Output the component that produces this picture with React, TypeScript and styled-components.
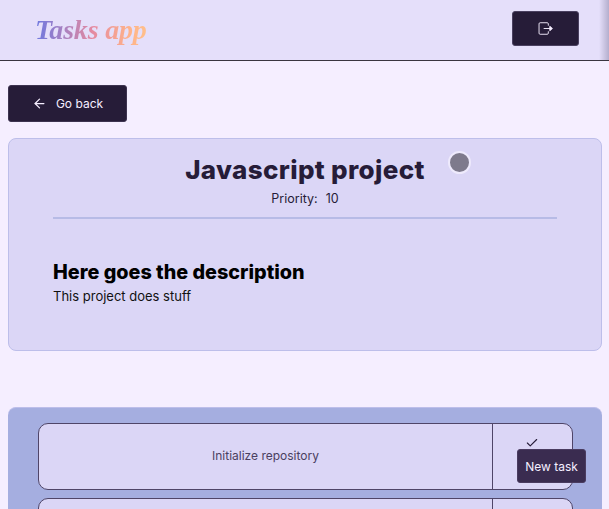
import { ArrowLeft, Check } from 'lucide-react'
import styled, { createGlobalStyle } from 'styled-components'

const GlobalStyle = createGlobalStyle`
  html, body {
    margin: 0;
    height: 100%;
    overflow: hidden;
    background: #f5eeff;
  }
  body {
    font-family: Inter, "Liberation Sans", sans-serif;
  }
  * {
    box-sizing: border-box;
  }
`

function ExitIcon() {
  return (
    <svg width="16" height="13" viewBox="0 0 17 14" fill="none" stroke="currentColor" strokeWidth="1">
      <path d="M11 4V2a1.2 1.2 0 0 0-1.2-1.2H2.2A1.2 1.2 0 0 0 1 2v10a1.2 1.2 0 0 0 1.2 1.2h7.6A1.2 1.2 0 0 0 11 12v-2" />
      <path d="M6 7h8" />
      <path d="M12.6 4.6 15.4 7l-2.8 2.4z" fill="currentColor" />
    </svg>
  )
}

export default function App() {
  return (
    <Page>
      <GlobalStyle />
      <Header>
        <Logo>Tasks app</Logo>
        <LogoutButton title="Log out">
          <ExitIcon />
        </LogoutButton>
      </Header>
      <Main>
        <BackButton>
          <ArrowLeft size={15} strokeWidth={2} />
          Go back
        </BackButton>
        <ProjectCard>
          <TitleRow>
            <Title>Javascript project</Title>
            <StatusDot />
          </TitleRow>
          <Priority>
            <span>Priority:</span>
            <span>10</span>
          </Priority>
          <Divider />
          <DescriptionTitle>Here goes the description</DescriptionTitle>
          <Description>This project does stuff</Description>
        </ProjectCard>
        <TaskPanel>
          <TaskRow>
            <TaskName>Initialize repository</TaskName>
            <TaskAction>
              <Check size={14} strokeWidth={1.9} />
            </TaskAction>
          </TaskRow>
          <TaskRow>
            <TaskName />
            <TaskAction />
          </TaskRow>
        </TaskPanel>
      </Main>
      <NewTaskButton>New task</NewTaskButton>
    </Page>
  )
}

const Page = styled.div`
  height: 509px;
  overflow: hidden;
`

const Header = styled.header`
  position: relative;
  display: flex;
  align-items: center;
  justify-content: space-between;
  height: 61px;
  padding: 0 30px 0 35px;
  background: #e5dffa;
  border-bottom: 1px solid #3a3540;

  &::after {
    content: '';
    position: absolute;
    top: 0;
    right: 0;
    bottom: 0;
    width: 10px;
    background: linear-gradient(90deg, rgba(120, 115, 150, 0), rgba(120, 115, 150, 0.45));
  }
`

const Logo = styled.div`
  font-family: "Liberation Serif", serif;
  font-size: 28px;
  font-style: italic;
  font-weight: 700;
  letter-spacing: -0.2px;
  background: linear-gradient(90deg, #6d78e0 0%, #e58aa0 52%, #ffb38a 85%, #ffc08a 100%);
  background-clip: text;
  -webkit-background-clip: text;
  color: transparent;
`

const LogoutButton = styled.button`
  display: flex;
  align-items: center;
  justify-content: center;
  width: 67px;
  height: 35px;
  padding: 0;
  margin-bottom: 3px;
  color: #f5eeff;
  background: #261c38;
  border: 1px solid #4a4060;
  border-radius: 3px;
`

const Main = styled.main`
  display: flex;
  flex-direction: column;
  align-items: stretch;
  padding: 24px 7px 0 8px;
`

const BackButton = styled.button`
  display: flex;
  align-items: center;
  justify-content: center;
  gap: 9px;
  width: 119px;
  height: 37px;
  padding: 0;
  font-family: inherit;
  font-size: 12px;
  color: #f5eeff;
  background: #261c38;
  border: 1px solid #3d3350;
  border-radius: 3px;
`

const ProjectCard = styled.section`
  display: flex;
  flex-direction: column;
  height: 213px;
  margin-top: 16px;
  padding: 14px 44px 0;
  background: #dbd6f6;
  border: 1px solid #bdbeea;
  border-radius: 8px;
`

const TitleRow = styled.div`
  position: relative;
  display: flex;
  justify-content: center;
`

const Title = styled.h1`
  margin: 0;
  font-size: 26px;
  line-height: 34px;
  font-weight: 800;
  letter-spacing: 0.35px;
  color: #261c38;
`

const StatusDot = styled.span`
  position: absolute;
  top: -2px;
  right: 86px;
  width: 23px;
  height: 23px;
  background: #7e7a8c;
  border: 2px solid #eeeafc;
  border-radius: 50%;
`

const Priority = styled.div`
  display: flex;
  justify-content: center;
  gap: 8px;
  margin-top: 3px;
  font-size: 12.5px;
  line-height: 18px;
  color: #261c38;
`

const Divider = styled.hr`
  width: 100%;
  height: 2px;
  margin: 9px 0 0;
  background: #b7bbe6;
  border: none;
`

const DescriptionTitle = styled.h2`
  margin: 40px 0 0;
  font-size: 19.8px;
  line-height: 26px;
  font-weight: 800;
  color: #000;
`

const Description = styled.p`
  margin: 2px 0 0;
  font-size: 13px;
  line-height: 18px;
  color: #111;
`

const TaskPanel = styled.section`
  display: flex;
  flex-direction: column;
  gap: 8px;
  margin-top: 56px;
  padding: 15px 29px 16px 30px;
  background: #a5aee0;
  border-radius: 8px 8px 0 0;
  border-top: 1px solid #bdbeea;
`

const TaskRow = styled.div`
  display: grid;
  grid-template-columns: 1fr 80px;
  flex: none;
  height: 67px;
  background: #dbd6f6;
  border: 1px solid #4f4568;
  border-radius: 10px;
`

const TaskName = styled.div`
  display: flex;
  align-items: center;
  justify-content: center;
  padding-bottom: 2px;
  font-size: 12px;
  color: #4a4060;
`

const TaskAction = styled.div`
  display: flex;
  justify-content: center;
  padding-top: 12px;
  padding-right: 1px;
  color: #261c38;
  border-left: 1px solid #4f4568;
`

const NewTaskButton = styled.button`
  position: fixed;
  top: 449px;
  left: 517px;
  width: 69px;
  height: 34px;
  padding: 0;
  font-family: Inter, "Liberation Sans", sans-serif;
  font-size: 12px;
  color: #f5eeff;
  background: #3a2c50;
  border: 1px solid #4a3c60;
  border-radius: 3px;
`
